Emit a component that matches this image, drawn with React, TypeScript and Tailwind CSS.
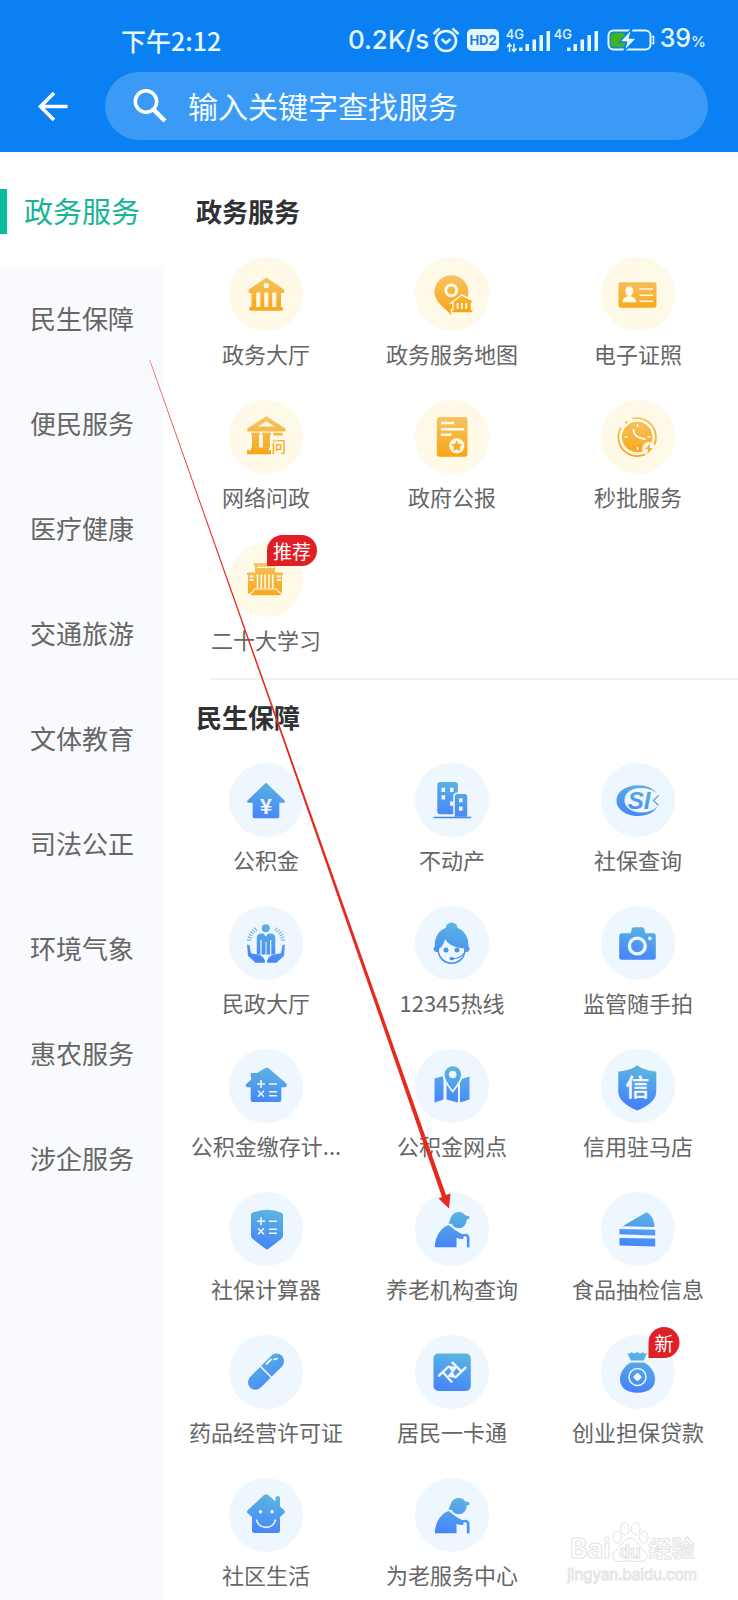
import React from "react";

const AMBER = "url(#amber)";
const BLUE = "url(#blue)";
const CREAM = "#fff9e8";
const ICE = "#eef6fe";

type Service = { label: string; icon: React.ReactNode; badge?: string };

function Gradients() {
  return (
    <svg className="absolute size-0" aria-hidden="true">
      <defs>
        <linearGradient id="amber" gradientUnits="userSpaceOnUse" x1="37" y1="17" x2="37" y2="57">
          <stop offset="0" stopColor="#f6c566" />
          <stop offset="1" stopColor="#f8a413" />
        </linearGradient>
        <linearGradient id="blue" gradientUnits="userSpaceOnUse" x1="42" y1="17" x2="34" y2="57">
          <stop offset="0" stopColor="#5cb6df" />
          <stop offset="1" stopColor="#4583fb" />
        </linearGradient>
      </defs>
    </svg>
  );
}

const CalcSigns = ({ y1, y2 }: { y1: number; y2: number }) => (
  <path
    d={`M28 ${y1}h8M32 ${y1 - 4}v8M40 ${y1}h8M29 ${y2 - 3}l6 6M35 ${y2 - 3}l-6 6M40 ${y2 - 2}h8M40 ${y2 + 2}h8`}
    stroke={ICE}
    strokeWidth="1.6"
    fill="none"
  />
);

const hall = (
  <g fill={AMBER}>
    <path d="M37.3 20.5 55 32.5V36H19.7V32.5Z" strokeLinejoin="round" />
    <path d="M22.5 36h29.5v14H22.5z" />
    <rect x="20.3" y="50" width="33.6" height="3.8" rx="1" />
    <path d="M27.3 35.5h4V50h-4zM35.3 35.5h4V50h-4zM43.3 35.5h4V50h-4z" fill={CREAM} />
    <circle cx="37.3" cy="28.6" r="2.7" fill={CREAM} />
  </g>
);

const mapHall = (
  <g fill={AMBER}>
    <path d="M36.3 58C33 54 19.4 45 19.4 35.3a17 17 0 0 1 34 0C53.400 41 50 46 46 49L38 53Z" />
    <circle cx="36.2" cy="33.3" r="5.4" stroke={CREAM} strokeWidth="3" />
    <path d="M46.8 38 58 43.500V46h-1.500v6.500H58V56H36.500V52.500H38V46H36Z" stroke={CREAM} strokeWidth="1.4" />
    <path d="M42.600 46v6M46.900 46v6M51.200 46v6" stroke={CREAM} strokeWidth="1.8" />
  </g>
);

const idCard = (
  <g fill={AMBER}>
    <rect x="17.500" y="25.300" width="38" height="25.400" rx="2.500" />
    <ellipse cx="28.300" cy="34" rx="4" ry="4.800" fill={CREAM} />
    <path d="M26.500 37h3.600v2.500c3 1 5.200 2 5.200 5.800H21.500c0-3.800 2-4.800 5-5.800z" fill={CREAM} />
    <path d="M38.500 32H52M38.500 38.200H52M38.500 44.200H52" stroke={CREAM} strokeWidth="1.500" />
  </g>
);

const askHall = (
  <g fill={AMBER}>
    <path d="M37.300 16.200 56.500 28.500v3H18.300v-3Z" />
    <path d="M37.300 21.300 45.500 26.500H29Z" fill={CREAM} />
    <path d="M22 32.700h9v2h-1v13h-7v-13h-1zM33 32.700h9v2h-1v13h-7v-13h-1zM44.300 32.700h9.500v2.800h-9.500z" />
    <path d="M22 47.500h18v2.800h2v4H18v-4h4z" />
    <text x="42.500" y="52" fontSize="14.500" fontWeight="500">问</text>
  </g>
);

const bulletin = (
  <g fill={AMBER}>
    <rect x="21.800" y="17" width="30.700" height="39.700" rx="3" />
    <path d="M26 23h13M26 29.300h23.300M26 34.700h10.300" stroke={CREAM} strokeWidth="2.400" />
    <circle cx="41.800" cy="45.800" r="7.600" fill={CREAM} />
    <path d="m41.800 40.200 1.700 3.600 4 .5-2.900 2.800.7 4-3.500-1.900-3.500 1.900.7-4-2.900-2.800 4-.5z" />
  </g>
);

const clock = (
  <g fill={AMBER}>
    <circle cx="36.200" cy="37" r="15.200" />
    <path d="M31.500 18.600A19 19 0 0 1 53 45.500M46 53.500A19 19 0 0 1 20 27.500" fill="none" stroke={AMBER} strokeWidth="1.800" />
    <circle cx="25.500" cy="22.300" r="1.200" />
    <path d="M32.500 29.800c.6 3.600 2 5.800 4 7 2 1.400 4.500 1.500 7.500 2.300" fill="none" stroke={CREAM} strokeWidth="1.900" strokeLinecap="round" />
    <path d="M36.500 24v3M36.500 47v3M23.500 37h3M46.500 37h3" stroke={CREAM} strokeWidth="1.300" />
    <circle cx="48" cy="48.700" r="6.800" fill={CREAM} />
    <path d="m49.500 43.500-5.500 5.800h3.300l-1.300 5 5.800-6.300h-3.300z" />
  </g>
);

const congress = (
  <g fill={AMBER}>
    <path d="M24 20.300h23.500l-1.500 4v5.200H26v-5.200z" />
    <path d="M18 29.500h8v-2h20v2h8V32h-1v18.500H19V32h-1z" />
    <path d="M28 24.300h17.500" stroke={CREAM} strokeWidth="1.200" />
    <path d="M28.500 31.500v14M32.300 31.500v14M36.100 31.500v14M39.900 31.500v14M43.700 31.500v14" stroke={CREAM} strokeWidth="1.600" />
    <path d="M20.500 33.500h4M20.500 37h4M47.800 33.500h4M47.800 37h4" stroke={CREAM} strokeWidth="1.800" />
    <path d="M25.500 46h21.500c1.500 1 2 3 5.500 4.500v2.300H21.500V50.500c3-1.500 2.800-3.500 4-4.500z" stroke={CREAM} strokeWidth="1.100" />
  </g>
);

const yenHouse = (
  <g fill={BLUE}>
    <path d="M35.800 20.700q1.200-1.200 2.400 0L55.500 37.600q1.200 2-1 2.200H50.300V53.500q0 1.800-1.800 1.800h-23q-1.800 0-1.800-1.800V39.800H19.500q-2.200-.2-1-2.200z" />
    <text x="37" y="50.500" fontSize="21" fontWeight="700" textAnchor="middle" fill={ICE}>¥</text>
  </g>
);

const buildings = (
  <g fill={BLUE}>
    <rect x="22.300" y="19" width="20.600" height="32.300" rx="3" />
    <path d="M26.500 24.800h3.600v4.200h-3.600zM35 24.800h3.600v4.200H35zM26.500 32.300h3.600v4.200h-3.600zM35 38.500h3.600v4.200H35z" fill={ICE} />
    <path d="M39 54.500V33.500q0-3.300 3.300-3.300h7.400q3.300 0 3.300 3.300v21z" stroke={ICE} strokeWidth="1.600" />
    <path d="M44 35.200h3.600v4H44zM44 43.500h3.600v4.300H44z" fill={ICE} />
    <path d="M18.500 54.500h37.700" stroke="#4a86f0" strokeWidth="1.700" />
  </g>
);

const socialSecurity = (
  <g fill={BLUE}>
    <path d="M55.500 30C52 25 45.500 22.200 37 22.200c-12 0-21.500 6.500-21.500 15.300S25 53 37 53c9 0 16-3.500 19.500-9.500-4 4-9.500 6-16.500 6-9.500 0-16.500-5-16.500-12.200S30 25 39.500 25c7 0 12.500 2 16 5z" />
    <path d="m57.500 32.500-5 5 5 5" fill="none" stroke={BLUE} strokeWidth="1.200" />
    <text x="38" y="46" fontSize="24" fontWeight="700" fontStyle="italic" textAnchor="middle" fontFamily="Liberation Sans, sans-serif">SI</text>
  </g>
);

const civil = (
  <g fill={BLUE}>
    <circle cx="36.800" cy="22.200" r="4" />
    <path d="M27.800 48.500V32q0-4.500 4.500-4.500h2l2.500 3 2.500-3h2q5 0 5 4.500v16.500z" />
    <path d="M32 34v14.500M41.700 34v14.500" stroke={ICE} strokeWidth="1.200" />
    <path d="M37 36v12.500" stroke={ICE} strokeWidth="1" />
    <path d="M18 38.500l2.500.8 1.500 8 6.500 1.200c5 1 7.500 4 7.500 8.300h-9.500l-7.500-7zM56 38.500l-2.500.8-1.500 8-6.500 1.200c-5 1-7.500 4-7.500 8.300h9.500l7.500-7z" />
    <path d="M20 34.500c.7-4.500 3.500-9 8-12M54 34.500c-.7-4.500-3.500-9-8-12" fill="none" stroke={BLUE} strokeWidth="4.200" strokeDasharray=".9 1.700" />
  </g>
);

const operator = (
  <g fill={BLUE}>
    <circle cx="36.600" cy="22.500" r="6" />
    <path d="M36.600 21C26 21 19.800 29 19.800 39v1.500c-2 1.500-1.500 4.500 1.500 5.500h30.600c3-1 3.500-4 1.500-5.500V39c0-10-6.200-18-16.800-18z" />
    <circle cx="36.600" cy="44" r="13.300" fill={ICE} stroke={BLUE} strokeWidth="1.500" />
    <path d="M22.500 43.500c4-1.500 6.500-5.500 7.500-10.500 4 6.500 11 9 21 9.500L48 30l-12-5-12 5z" />
    <circle cx="31" cy="43.900" r="2.500" />
    <circle cx="42" cy="43.900" r="2.500" />
    <path d="M36.500 52.700c5.500.2 10-1.700 12.500-5.700" fill="none" stroke={BLUE} strokeWidth="1.100" />
    <ellipse cx="36.800" cy="52.700" rx="2.200" ry="1.600" />
  </g>
);

const camera = (
  <g fill={BLUE}>
    <path d="m29.500 28 1.300-5.200q.4-1.500 2-1.500h8.500q1.600 0 2 1.500L44.500 28z" />
    <rect x="18.200" y="27.300" width="36.600" height="26.500" rx="2.500" />
    <circle cx="36.300" cy="40" r="7.900" stroke={ICE} strokeWidth="3.400" />
    <circle cx="48.900" cy="32.400" r="1.800" fill={ICE} />
  </g>
);

const calcHouse = (
  <g fill={BLUE}>
    <path d="M35.500 19.500q2.200-1.500 4.400 0L57.300 34.500q1.500 3-1.300 3.800H52.300V51q0 2-2 2H23.700q-2 0-2-2V38.300H18.300q-2.500-1-1-3.300l5-4.500-.8-6.500h6.500z" />
    <CalcSigns y1={35} y2={44.700} />
  </g>
);

const mapPin = (
  <g fill={BLUE}>
    <path d="M19.500 29.500 28.500 27v23.500L19.500 53.500zM31.500 28 43 31.500V53.500L31.500 50.500zM45 30.500l9.500-3V50.500L45 53.500z" />
    <path d="M37.700 42.500C33 36.500 28.500 31.500 28.500 25.600a9.300 9.300 0 0 1 18.600 0c0 5.900-4.700 10.900-9.400 16.900z" stroke={ICE} strokeWidth="1.800" />
    <circle cx="37.700" cy="25.500" r="3.800" fill={ICE} />
  </g>
);

const creditShield = (
  <g fill={BLUE}>
    <path d="M36.300 16.300c5 3.800 11 5.700 19 6.200v20c0 8-7.500 14.500-19 19-11.500-4.500-19-11-19-19v-20c8-.5 14-2.400 19-6.200z" />
    <text x="36.300" y="46.500" fontSize="24" fontWeight="700" textAnchor="middle" fill={ICE}>信</text>
  </g>
);

const calcShield = (
  <g fill={BLUE}>
    <path d="M22 23q0-1.500 1.500-2.200Q38 14.500 52.500 20.800 54 21.500 54 23V43.500q0 2-1.500 3.300L39.500 56.800q-1.500 1-3 0L23.500 46.800Q22 45.500 22 43.500z" />
    <CalcSigns y1={29.200} y2={39.300} />
  </g>
);

const elder = (
  <g fill={BLUE}>
    <circle cx="43.700" cy="28.300" r="7.900" />
    <path d="M33.300 31.500c1.700-1.500 1.600-5.500 4-8.500 3.500-4.200 10.500-4 12.700.3l4.500 1.200-.3 2.200-7 2-8 3.500z" />
    <path d="M19.800 55.200C20 44.500 26 35.500 33.500 33c4.500 3 9 7.500 14.500 9.500 1.500 2-.5 5-3 4.200L41.500 46v9.200z" />
    <path d="M47 47v-1.500c0-3.500 6.200-3.500 6.200.5v9.200" fill="none" stroke={BLUE} strokeWidth="2.600" />
  </g>
);

const cake = (
  <g fill={BLUE}>
    <path d="M21.500 34.300 45.500 20.300c5 2.500 8 8 8 14.700zM18.500 37l35.700.7v5.800L18.500 42.300zM18.500 46l35.700.6v7.800L18.500 53.600z" />
  </g>
);

const pill = (
  <g fill={BLUE}>
    <rect x="14.500" y="29.200" width="45" height="15" rx="7.500" transform="rotate(-45 37 36.700)" />
    <path d="m31 31 11.500 11.500" stroke={ICE} strokeWidth="1.700" />
    <path d="m37.500 29 4.500-4.500M45 24.500l3-.8" stroke={ICE} strokeWidth="1.800" strokeLinecap="round" />
  </g>
);

const cardPass = (
  <g>
    <rect x="18.500" y="18.400" width="37.300" height="37.600" rx="5" fill={BLUE} />
    <path
      d="m24 40.700 9.500-9.200M50.500 32.700l-9.800 9.500M28 37.300l8.500 9.500M46.500 36.700 37.500 27.700"
      stroke={ICE}
      strokeWidth="2.400"
      strokeLinecap="round"
      fill="none"
    />
    <path d="M32.500 30.800 42.300 32 38 37.800 41.600 43.200 32.200 41.600 36.500 36.200Z" fill={ICE} />
  </g>
);

const moneyBag = (
  <g fill={BLUE}>
    <path d="M26.300 18c2.500 1 3 .5 4.500-1 1.500 1.800 3.200 1.800 5.500-.2 2.300 2 4 2 5.500.2 1.500 1.500 2.200 2 4.400 1l-3.500 7.500H29.800z" />
    <path d="M30 27.500h13c6 3 11 9.500 11 16.500 0 8.500-6 13.700-17.500 13.700S19 52.500 19 44c0-7 5-13.500 11-16.500z" />
    <circle cx="36.500" cy="42" r="8.500" fill="none" stroke={ICE} strokeWidth="1.500" />
    <rect x="33.200" y="38.700" width="6.600" height="6.600" rx="1.200" fill={ICE} transform="rotate(45 36.500 42)" />
  </g>
);

const smileHouse = (
  <g fill={BLUE}>
    <path d="M35 17q2-1.500 4 0l7.500 6.500V20q0-2 2.300-2T51 20v8.500l4.500 4q1 1.300 0 2.500L51 39v13.500q0 2.500-2.500 2.500h-23q-2.500 0-2.500-2.500V39l-4.500-4q-1-1.300 0-2.500z" />
    <circle cx="31.500" cy="33.800" r="1.700" fill={ICE} />
    <circle cx="43" cy="33.800" r="1.700" fill={ICE} />
    <path d="M27.500 41.500c2 10.500 17 10.500 19 0" fill="none" stroke={ICE} strokeWidth="1.700" />
  </g>
);

const governmentServices: Service[] = [
  { label: "政务大厅", icon: hall },
  { label: "政务服务地图", icon: mapHall },
  { label: "电子证照", icon: idCard },
  { label: "网络问政", icon: askHall },
  { label: "政府公报", icon: bulletin },
  { label: "秒批服务", icon: clock },
  { label: "二十大学习", icon: congress, badge: "推荐" },
];

const livelihoodServices: Service[] = [
  { label: "公积金", icon: yenHouse },
  { label: "不动产", icon: buildings },
  { label: "社保查询", icon: socialSecurity },
  { label: "民政大厅", icon: civil },
  { label: "12345热线", icon: operator },
  { label: "监管随手拍", icon: camera },
  { label: "公积金缴存计...", icon: calcHouse },
  { label: "公积金网点", icon: mapPin },
  { label: "信用驻马店", icon: creditShield },
  { label: "社保计算器", icon: calcShield },
  { label: "养老机构查询", icon: elder },
  { label: "食品抽检信息", icon: cake },
  { label: "药品经营许可证", icon: pill },
  { label: "居民一卡通", icon: cardPass },
  { label: "创业担保贷款", icon: moneyBag, badge: "新" },
  { label: "社区生活", icon: smileHouse },
  { label: "为老服务中心", icon: elder },
];

const categories = [
  "民生保障",
  "便民服务",
  "医疗健康",
  "交通旅游",
  "文体教育",
  "司法公正",
  "环境气象",
  "惠农服务",
  "涉企服务",
];

function ServiceGrid({ items, circle }: { items: Service[]; circle: string }) {
  return (
    <ul className="grid grid-cols-3 gap-y-8 pr-[7px] pl-[9px]">
      {items.map((s) => (
        <li key={s.label}>
          <a href="#" className="flex flex-col items-center gap-[7px] text-[22px] leading-[30px] whitespace-nowrap text-[#666]">
            <span className={`relative size-[74px] rounded-full ${circle}`}>
              <svg viewBox="0 0 74 74" className="size-full" aria-hidden="true">
                {s.icon}
              </svg>
              {s.badge && (
                <span className="absolute -top-2 left-[63px] -translate-x-1/2 rounded-full rounded-bl-none bg-[#e01f25] px-[6px] text-[19px] leading-[31px] text-white">
                  {s.badge}
                </span>
              )}
            </span>
            {s.label}
          </a>
        </li>
      ))}
    </ul>
  );
}

function Signal({ arrows }: { arrows?: boolean }) {
  return (
    <span className="relative block h-[26px] w-[46px]">
      <span className="absolute top-0 left-0 font-[Inter,sans-serif] text-[13px] leading-[14px]">4G</span>
      <svg viewBox="0 0 46 26" className="size-full" fill="currentColor" aria-hidden="true">
        {arrows && (
          <path d="M3.500 25V17M1 20l2.500-3 2 2.500M8 16.500v8M6 22l2 2.500L10.500 21.500" fill="none" stroke="currentColor" strokeWidth="1.500" />
        )}
        <path d="M13 20.500h3.500V24H13zM19.500 17H23v7h-3.500zM26.500 12.500H30V24h-3.500zM33.500 8H37v16h-3.500zM40.500 4H44v20h-3.500z" />
      </svg>
    </span>
  );
}

function StatusBar() {
  return (
    <div className="flex h-[72px] items-center justify-between pt-2 pr-[32px] pl-[121px] font-medium text-[#e6f8ff]">
      <span className="text-[25px] leading-8">下午2:12</span>
      <div className="flex items-center">
        <span className="font-[Inter,sans-serif] text-[26px] leading-8">0.2K/s</span>
        <svg viewBox="0 0 28 28" className="ml-[3px] size-7" fill="none" stroke="currentColor" strokeWidth="2.600" aria-hidden="true">
          <circle cx="14" cy="15" r="10" />
          <path d="M1.500 8 7.500 2.500M26.500 8l-6-5.500M9.500 13l4.500 4 4.500-4" />
        </svg>
        <span className="ml-[7px] rounded-[5px] bg-[#e6f8ff] px-[2px] font-[Inter,sans-serif] text-[13px] leading-[22px] font-bold text-[#1b7fe0]">HD2</span>
        <span className="ml-[7px] flex gap-[2px]">
          <Signal arrows />
          <Signal />
        </span>
        <svg viewBox="0 0 48 24" className="ml-[7px] h-6 w-12" fill="none" aria-hidden="true">
          <rect x="1.500" y="2.500" width="42" height="19" rx="5" stroke="currentColor" strokeWidth="2" />
          <path d="M45 8.500h1.500v7H45" stroke="currentColor" strokeWidth="1.600" />
          <rect x="4" y="5" width="14" height="14" rx="2.500" fill="#3fb618" />
          <path d="M25 .5 12.500 14h7L17 23.500 30 10h-7.500z" fill="currentColor" stroke="#0a80f2" strokeWidth="1.500" />
        </svg>
        <span className="ml-[5px] font-[Inter,sans-serif] text-[25px] leading-8">
          39<span className="text-[15px]">%</span>
        </span>
      </div>
    </div>
  );
}

function Watermark() {
  return (
    <div
      aria-hidden="true"
      className="pointer-events-none absolute right-[41px] bottom-[14px] flex flex-col items-center text-white [-webkit-text-stroke:1px_#e4e4e4]"
    >
      <div className="flex h-[44px] items-end font-bold">
        <span className="font-[Inter,sans-serif] text-[27px] leading-[30px]">Bai</span>
        <svg viewBox="0 0 40 44" className="h-[44px] w-[38px]" fill="#fff" stroke="#dedede" strokeWidth="1">
          <ellipse cx="6.500" cy="17" rx="4.500" ry="6" />
          <ellipse cx="14.500" cy="8" rx="4.700" ry="6.500" />
          <ellipse cx="26" cy="8" rx="4.700" ry="6.500" />
          <ellipse cx="34.500" cy="17" rx="4.500" ry="6" />
          <path d="M20 18c6 0 8 6 12 10s8 7 5 12c-3 4-10 2-17 2s-14 2-17-2c-3-5 1-8 5-12s6-10 12-10z" />
          <text x="20" y="39" fontSize="18" textAnchor="middle" fontFamily="Inter, sans-serif">du</text>
        </svg>
        <span className="text-[23px] leading-[34px]">经验</span>
      </div>
      <span className="font-[Inter,sans-serif] text-[15px] leading-[22px]">jingyan.baidu.com</span>
    </div>
  );
}

export default function App() {
  return (
    <div className="relative flex min-h-screen flex-col overflow-hidden bg-white font-['Noto_Sans_CJK_SC',sans-serif]">
      <Gradients />
      <header className="bg-[#0a80f2] pb-3">
        <StatusBar />
        <div className="flex items-center pr-[30px] pl-[37px]">
          <button type="button" aria-label="返回" className="mr-[36px] text-white">
            <svg viewBox="0 0 32 32" className="size-8" fill="none" stroke="currentColor" strokeWidth="3.600" aria-hidden="true">
              <path d="M30.500 16.500H3.500M17 3 3.500 16.500 17 30" />
            </svg>
          </button>
          <label className="flex h-[68px] min-w-0 flex-1 items-center rounded-full bg-[#3a9af5] pr-8 pb-[2px] pl-[27px] text-white">
            <svg viewBox="0 0 36 36" className="mr-5 size-9 shrink-0" fill="none" stroke="currentColor" strokeWidth="3.500" aria-hidden="true">
              <circle cx="14" cy="14.500" r="10.700" />
              <path d="m21.500 22.500 11.500 11.500" strokeWidth="4.500" />
            </svg>
            <input
              type="text"
              aria-label="查找服务"
              placeholder="输入关键字查找服务"
              className="min-w-0 flex-1 bg-transparent text-[30px] leading-10 outline-none placeholder:text-[#f2fbff]"
            />
          </label>
        </div>
      </header>

      <div className="flex flex-1">
        <nav className="flex w-[164px] shrink-0 flex-col bg-[#f8fafd]">
          <button
            type="button"
            aria-current="true"
            className="relative h-[113px] bg-white pt-[3px] text-[29px] leading-10 text-[#16b595] before:absolute before:top-[37px] before:left-0 before:h-[45px] before:w-[7px] before:bg-[#07bd9b]"
          >
            政务服务
          </button>
          {categories.map((c) => (
            <button key={c} type="button" className="h-[105px] text-[26px] leading-10 text-[#666]">
              {c}
            </button>
          ))}
        </nav>

        <main className="min-w-0 flex-1 pt-[39px] pb-[10px]">
          <section>
            <h2 className="mb-[26px] ml-8 text-[26px] leading-10 font-bold text-[#303133]">政务服务</h2>
            <ServiceGrid items={governmentServices} circle="bg-[#fff9e8]" />
          </section>
          <hr className="mt-[24px] ml-[46px] border-t-2 border-[#f1f2f3]" />
          <section>
            <h2 className="mt-[17px] mb-[26px] ml-8 text-[26px] leading-10 font-bold text-[#303133]">民生保障</h2>
            <ServiceGrid items={livelihoodServices} circle="bg-[#eef6fe]" />
          </section>
        </main>
      </div>

      <svg
        viewBox="0 0 304 852"
        className="pointer-events-none absolute top-[358px] left-[148px] h-[852px] w-[304px]"
        fill="#e62a1e"
        aria-hidden="true"
      >
        <path d="M1.500 2 2 2 136.500 381 239.500 671 298 837 302.500 835.500 301 850.500 290.500 840.500 294 839 236.500 673 135 382Z" />
      </svg>
      <Watermark />
    </div>
  );
}
